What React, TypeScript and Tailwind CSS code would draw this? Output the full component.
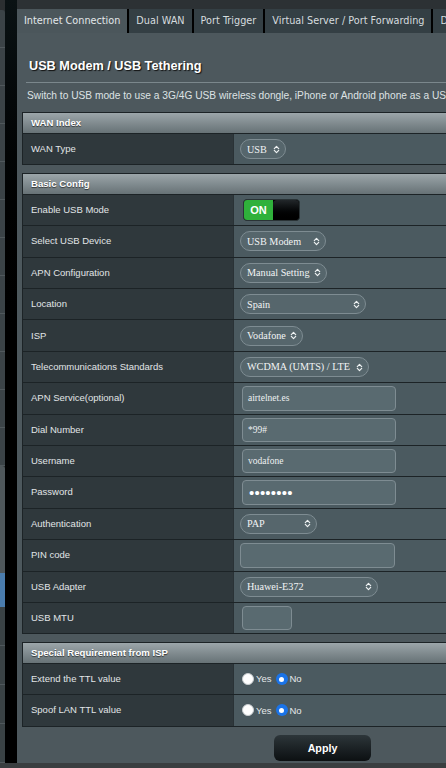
import type { ReactNode } from 'react';

type Field =
  | { label: string; kind: 'select'; value: string; w: string }
  | { label: string; kind: 'input'; value: string; w: string; ml: string }
  | { label: string; kind: 'password'; w: string }
  | { label: string; kind: 'toggle' }
  | { label: string; kind: 'radio' };

const SECTIONS: { title: string; fields: Field[] }[] = [
  {
    title: 'WAN Index',
    fields: [{ label: 'WAN Type', kind: 'select', value: 'USB', w: 'w-[46px]' }],
  },
  {
    title: 'Basic Config',
    fields: [
      { label: 'Enable USB Mode', kind: 'toggle' },
      { label: 'Select USB Device', kind: 'select', value: 'USB Modem', w: 'w-[86px]' },
      { label: 'APN Configuration', kind: 'select', value: 'Manual Setting', w: 'w-[87px]' },
      { label: 'Location', kind: 'select', value: 'Spain', w: 'w-[126px]' },
      { label: 'ISP', kind: 'select', value: 'Vodafone', w: 'w-[63px]' },
      { label: 'Telecommunications Standards', kind: 'select', value: 'WCDMA (UMTS) / LTE', w: 'w-[129px]' },
      { label: 'APN Service(optional)', kind: 'input', value: 'airtelnet.es', w: 'w-[154px]', ml: 'ml-[2px]' },
      { label: 'Dial Number', kind: 'input', value: '*99#', w: 'w-[154px]', ml: 'ml-[2px]' },
      { label: 'Username', kind: 'input', value: 'vodafone', w: 'w-[154px]', ml: 'ml-[2px]' },
      { label: 'Password', kind: 'password', w: 'w-[154px]' },
      { label: 'Authentication', kind: 'select', value: 'PAP', w: 'w-[77px]' },
      { label: 'PIN code', kind: 'input', value: '', w: 'w-[155px]', ml: 'ml-0' },
      { label: 'USB Adapter', kind: 'select', value: 'Huawei-E372', w: 'w-[138px]' },
      { label: 'USB MTU', kind: 'input', value: '', w: 'w-[50px]', ml: 'ml-[2px]' },
    ],
  },
  {
    title: 'Special Requirement from ISP',
    fields: [
      { label: 'Extend the TTL value', kind: 'radio' },
      { label: 'Spoof LAN TTL value', kind: 'radio' },
    ],
  },
];

const TABS = ['Internet Connection', 'Dual WAN', 'Port Trigger', 'Virtual Server / Port Forwarding', 'DMZ'];

function UpDown() {
  return (
    <svg width="7" height="9" viewBox="0 0 7 9" fill="none" stroke="#eef2f3" strokeWidth="1.2" strokeLinecap="round" strokeLinejoin="round">
      <path d="M1.3 3.6 L3.5 1.4 L5.7 3.6" />
      <path d="M1.3 5.4 L3.5 7.6 L5.7 5.4" />
    </svg>
  );
}

function Select({ value, w }: { value: string; w: string }) {
  return (
    <div className={`${w} h-[20px] flex items-center justify-between rounded-full border border-[#7e8c92] bg-[#56666c] pl-[6px] pr-[5px]`}>
      <span className="font-['Liberation_Serif',serif] text-[10.2px] text-[#f2f4f5] whitespace-nowrap">{value}</span>
      <UpDown />
    </div>
  );
}

function Radio({ on }: { on: boolean }) {
  return on ? (
    <span className="flex items-center justify-center w-[12px] h-[12px] rounded-full bg-[#1a73e8]">
      <span className="w-[5px] h-[5px] rounded-full bg-white" />
    </span>
  ) : (
    <span className="w-[12px] h-[12px] rounded-full bg-white border border-[#c9cdd0]" />
  );
}

function Value({ f }: { f: Field }): ReactNode {
  switch (f.kind) {
    case 'select':
      return <Select value={f.value} w={f.w} />;
    case 'input':
      return (
        <div className={`${f.w} ${f.ml} h-[24.5px] flex items-center rounded-[4px] border border-[#7e8c92] bg-[#596a70] px-[5px]`}>
          <span className="font-['Liberation_Serif',serif] text-[9.5px] text-[#eef1f2]">{f.value}</span>
        </div>
      );
    case 'password':
      return (
        <div className={`${f.w} ml-[2px] h-[24.5px] flex items-center rounded-[4px] border border-[#7e8c92] bg-[#596a70] px-[6px]`}>
          <span className="font-['Liberation_Sans',sans-serif] text-[15px] leading-none text-white tracking-[0.2px]">••••••••</span>
        </div>
      );
    case 'toggle':
      return (
        <div className="ml-[3px] flex h-[22px] w-[57px] overflow-hidden rounded-[4px] border border-[#2a3336] bg-black">
          <div className="w-[29px] flex items-center justify-center bg-[#2fb13b] text-white font-bold text-[11px]">ON</div>
          <div className="flex-1 rounded-[4px] bg-linear-to-b from-[#22272a] to-[#000000]" />
        </div>
      );
    case 'radio':
      return (
        <div className="ml-[2px] flex items-center text-[9.5px] text-[#e6e9ea]">
          <Radio on={false} />
          <span className="ml-[2px] mt-[1px]">Yes</span>
          <span className="ml-[4px]"><Radio on /></span>
          <span className="ml-[2px] mt-[1px]">No</span>
        </div>
      );
  }
}

function Section({ title, fields }: { title: string; fields: Field[] }) {
  return (
    <div className="w-[520px] border border-[#1c2326]">
      <div className="h-[20px] flex items-center pl-[8px] bg-linear-to-b from-[#9ca6aa] to-[#677276] text-[9.6px] font-bold text-white [text-shadow:0_1px_1px_rgba(0,0,0,0.6)]">
        {title}
      </div>
      {fields.map((f) => (
        <div key={f.label} className="flex h-[31.4px] border-t border-[#1c2326]">
          <div className="w-[211px] shrink-0 flex items-center pl-[8px] bg-[#2f383c] text-[9.5px] text-[#e1e5e7] border-r border-[#2a3236]">
            {f.label}
          </div>
          <div className="flex-1 flex items-center pl-[6px] bg-[#4b5a60]">
            <Value f={f} />
          </div>
        </div>
      ))}
    </div>
  );
}

function SideMenu() {
  return (
    <div className="w-[5px] shrink-0 flex flex-col bg-[#2b3033]">
      <div className="h-[10px] bg-[#2b2f31]" />
      <div className="h-[458px] rounded-tr-[3px] bg-[#3b4347] flex flex-col">
        {Array.from({ length: 12 }).map((_, i) => (
          <div key={i} className="h-[38px] border-b border-[#50585c] shrink-0" />
        ))}
      </div>
      <div className="h-[112px] rounded-tr-[3px] bg-[#4f575b]" />
      <div className="h-[36px] bg-[#4a7cad]" />
      <div className="flex-1 bg-[#3a4245] flex flex-col">
        {Array.from({ length: 4 }).map((_, i) => (
          <div key={i} className="h-[39px] border-b border-[#50585c] shrink-0" />
        ))}
      </div>
    </div>
  );
}

export default function App() {
  return (
    <div className="w-[446px] h-[768px] overflow-hidden flex flex-col bg-[#3a3e40] font-['Liberation_Sans',Arial,sans-serif]">
      <div className="flex h-[763px]">
        <SideMenu />
        <div className="w-[12px] shrink-0 bg-linear-to-b from-[#0a1214] via-black to-black" />

        {/* main panel */}
        <div className="flex-1 min-w-0 overflow-hidden flex flex-col bg-[#4d585d]">
          <div className="h-[9px] shrink-0 bg-[#2c3134]" />
          <div className="h-[24px] shrink-0 flex bg-[#1e2a2e]">
            <div className="w-px bg-[#1b2427]" />
            {TABS.map((t, i) => (
              <div
                key={t}
                className={`shrink-0 flex items-center px-[7px] border-r-2 border-black font-['DejaVu_Sans',Verdana,sans-serif] text-[9.7px] whitespace-nowrap ${
                  i === 0 ? 'bg-[#4b565b] text-[#e3e8ea]' : 'bg-[#343f44] text-[#d6dcdf]'
                }`}
              >
                {t}
              </div>
            ))}
          </div>

          <div className="pl-[5px]">
            <div className="mt-[26px] pl-[7px] h-[16px] flex items-center text-[12.7px] font-bold text-white [text-shadow:1px_1px_1px_#111]">
              USB Modem / USB Tethering
            </div>
            <div className="mt-[7px] ml-[4px] h-px w-[600px] bg-[#7b878c]" />
            <div className="mt-[6px] ml-[5px] h-[14px] flex items-center whitespace-nowrap text-[10.2px] text-[#dde2e4]">
              Switch to USB mode to use a 3G/4G USB wireless dongle, iPhone or Android phone as a USB modem.
            </div>

            <div className="mt-[9px] flex flex-col gap-[7.5px]">
              {SECTIONS.map((s) => (
                <Section key={s.title} title={s.title} fields={s.fields} />
              ))}
            </div>

            <div className="mt-[8px] ml-[252px] w-[97px] h-[26px] flex items-center justify-center rounded-[6px] bg-linear-to-b from-[#2d363a] to-[#0c1012] text-[10.7px] font-bold text-white">
              Apply
            </div>
          </div>
        </div>
      </div>
      <div className="flex-1 bg-[#3a3e40]" />
    </div>
  );
}
